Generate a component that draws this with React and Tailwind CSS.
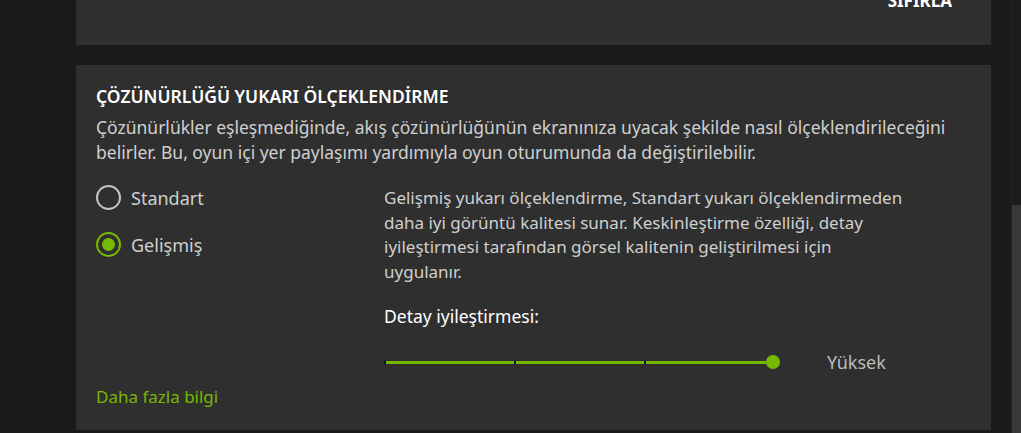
import React, { useState } from 'react';

const Radio = ({ checked, label, onClick }) => (
  <button onClick={onClick} className="flex items-center gap-[10px] text-left">
    <span
      className={`flex items-center justify-center w-[25px] h-[25px] rounded-full border-2 ${
        checked ? 'border-[#76b900]' : 'border-[#c4c4c4]'
      }`}
    >
      {checked && <span className="w-[13px] h-[13px] rounded-full bg-[#76b900]" />}
    </span>
    <span className="text-[18px] leading-[24px] text-[#cfcfcf]">{label}</span>
  </button>
);

const App = () => {
  const [mode, setMode] = useState('advanced');

  return (
    <div className="flex h-[433px] w-[1021px] overflow-hidden bg-[#1a1a1a] font-['Noto_Sans',sans-serif]">
      {/* Main column */}
      <div className="flex-1 pl-[76px] pr-[20px]">
        {/* Top card (scrolled) */}
        <div className="h-[45px] bg-[#2f2f2f] flex justify-end pr-[39px] overflow-hidden">
          <span className="-mt-[9px] text-[17px] font-bold text-white leading-[20px]">SIFIRLA</span>
        </div>

        {/* Upscaling card */}
        <div className="mt-[20px] h-[365px] bg-[#2f2f2f] pl-[20px] pt-[21px]">
          <h2 className="text-[17.5px] font-semibold text-white leading-[20px]">
            ÇÖZÜNÜRLÜĞÜ YUKARI ÖLÇEKLENDİRME
          </h2>
          <p className="mt-[9px] text-[17.5px] leading-[25px] text-[#cfcfcf] whitespace-nowrap">
            Çözünürlükler eşleşmediğinde, akış çözünürlüğünün ekranınıza uyacak şekilde nasıl ölçeklendirileceğini
            <br />
            belirler. Bu, oyun içi yer paylaşımı yardımıyla oyun oturumunda da değiştirilebilir.
          </p>

          <div className="mt-[20px] flex">
            <div className="w-[288px] flex flex-col gap-[22px]">
              <Radio checked={mode === 'standard'} label="Standart" onClick={() => setMode('standard')} />
              <Radio checked={mode === 'advanced'} label="Gelişmiş" onClick={() => setMode('advanced')} />
            </div>

            <div className="flex-1">
              <p className="mt-[1px] text-[17px] leading-[24.5px] text-[#cfcfcf] whitespace-nowrap">
                Gelişmiş yukarı ölçeklendirme, Standart yukarı ölçeklendirmeden
                <br />
                daha iyi görüntü kalitesi sunar. Keskinleştirme özelliği, detay
                <br />
                iyileştirmesi tarafından görsel kalitenin geliştirilmesi için
                <br />
                uygulanır.
              </p>

              <div className="mt-[21px] text-[17.5px] leading-[22px] text-white">Detay iyileştirmesi:</div>

              <div className="mt-[24px] flex items-center">
                <div className="relative flex items-center w-[396px] h-[16px]">
                  <div className="w-[2px] h-[3px] bg-black" />
                  <div className="w-[128px] h-[3px] bg-[#76b900]" />
                  <div className="w-[2px] h-[3px] bg-black" />
                  <div className="w-[128px] h-[3px] bg-[#76b900]" />
                  <div className="w-[2px] h-[3px] bg-black" />
                  <div className="w-[120px] h-[3px] bg-[#76b900]" />
                  <div className="absolute left-[382px] top-[1px] w-[14px] h-[14px] rounded-full bg-[#76b900]" />
                </div>
                <span className="ml-[47px] text-[18px] leading-[22px] text-[#bdbdbd]">Yüksek</span>
              </div>
            </div>
          </div>

          <a href="#" className="block mt-[13px] text-[17px] text-[#76b900] leading-[22px]">
            Daha fazla bilgi
          </a>
        </div>
      </div>

      {/* Scrollbar */}
      <div className="w-[10px] flex flex-col bg-[#1c1c1c] border-l border-[#222]">
        <div className="h-[205px]" />
        <div className="flex-1 bg-[#383838]" />
      </div>
    </div>
  );
};

export default App;
